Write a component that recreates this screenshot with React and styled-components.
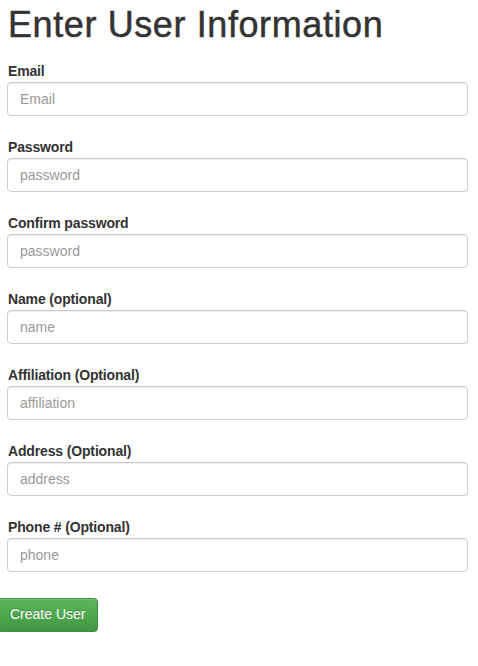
import styled, { createGlobalStyle } from "styled-components";

const GlobalStyle = createGlobalStyle`
  body {
    margin: 0;
    background: #fff;
    font-family: "Liberation Sans", Arial, sans-serif;
    font-size: 14px;
    line-height: 1.42857;
    color: #333;
  }
  * { box-sizing: border-box; }
`;

const fields = [
  { label: "Email", placeholder: "Email", type: "email" },
  { label: "Password", placeholder: "password", type: "password" },
  { label: "Confirm password", placeholder: "password", type: "password" },
  { label: "Name (optional)", placeholder: "name", type: "text" },
  { label: "Affiliation (Optional)", placeholder: "affiliation", type: "text" },
  { label: "Address (Optional)", placeholder: "address", type: "text" },
  { label: "Phone # (Optional)", placeholder: "phone", type: "text" },
];

export default function App() {
  return (
    <>
      <GlobalStyle />
      <Page>
        <Title>Enter User Information</Title>
        <form onSubmit={(e) => e.preventDefault()}>
          {fields.map((f) => (
            <FormGroup key={f.label}>
              <Label>{f.label}</Label>
              <Input type={f.type} placeholder={f.placeholder} />
            </FormGroup>
          ))}
          <SubmitButton type="submit">Create User</SubmitButton>
        </form>
      </Page>
    </>
  );
}

const Page = styled.div`
  padding: 0 10px 0 7px;
`;

const Title = styled.h1`
  margin: 5px 0 16px 1px;
  font-size: 36px;
  font-weight: 500;
  line-height: 1.1;
  letter-spacing: 0.6px;
  color: #333;
  -webkit-text-stroke: 0.5px #333;
`;

const FormGroup = styled.div`
  margin-bottom: 21px;
`;

const Label = styled.label`
  display: block;
  margin: 0 0 1px 1px;
  font-weight: bold;
  font-size: 14px;
  line-height: 20px;
  letter-spacing: -0.15px;
`;

const Input = styled.input`
  display: block;
  width: 100%;
  height: 34px;
  padding: 6px 12px;
  font-family: inherit;
  font-size: 14px;
  line-height: 1.42857;
  color: #555;
  background: #fff;
  border: 1px solid #ccc;
  border-radius: 4px;
  box-shadow: inset 0 1px 1px rgba(0, 0, 0, 0.075);
  &::placeholder {
    color: #999;
  }
  &:focus {
    outline: none;
    border-color: #66afe9;
  }
`;

const SubmitButton = styled.button`
  display: inline-block;
  margin: 5px 0 0 -10px;
  height: 34px;
  padding: 6px 12px;
  font-family: inherit;
  font-size: 14px;
  line-height: 1.42857;
  color: #fff;
  background-image: linear-gradient(to bottom, #5cb85c 0%, #419641 100%);
  border: 1px solid #3e8f3e;
  border-radius: 4px;
  text-shadow: 0 -1px 0 rgba(0, 0, 0, 0.2);
  box-shadow: inset 0 1px 0 rgba(255, 255, 255, 0.15), 0 1px 1px rgba(0, 0, 0, 0.075);
  cursor: pointer;
`;
